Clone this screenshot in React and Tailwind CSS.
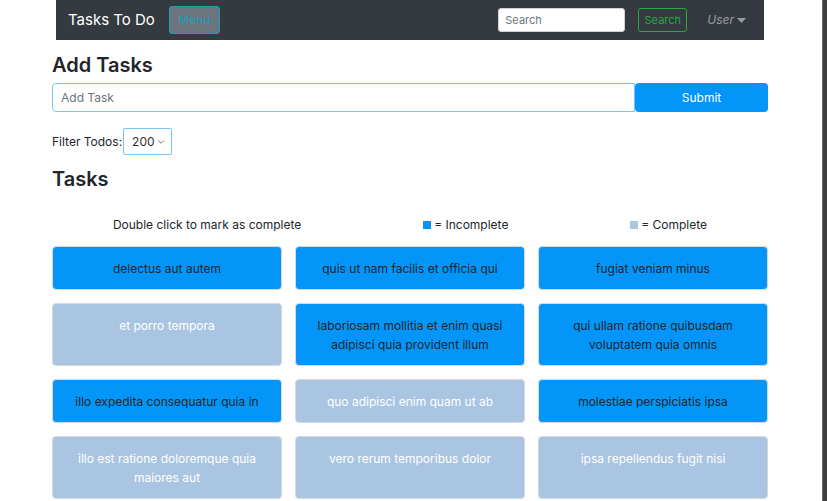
import { ChevronDown } from 'lucide-react'

const TASKS = [
  { title: 'delectus aut autem', done: false },
  { title: 'quis ut nam facilis et officia qui', done: false },
  { title: 'fugiat veniam minus', done: false },
  { title: 'et porro tempora', done: true },
  { title: 'laboriosam mollitia et enim quasi adipisci quia provident illum', done: false },
  { title: 'qui ullam ratione quibusdam voluptatem quia omnis', done: false },
  { title: 'illo expedita consequatur quia in', done: false },
  { title: 'quo adipisci enim quam ut ab', done: true },
  { title: 'molestiae perspiciatis ipsa', done: false },
  { title: 'illo est ratione doloremque quia maiores aut', done: true },
  { title: 'vero rerum temporibus dolor', done: true },
  { title: 'ipsa repellendus fugit nisi', done: true },
]

function Navbar() {
  return (
    <nav className="ml-[56px] w-[708px] h-[40px] bg-[#343a40] flex items-center pl-[12px] pr-[18px]">
      <span className="text-white text-[15px]">Tasks To Do</span>
      <button className="ml-[14px] h-[28px] w-[51px] rounded-[3px] border border-[#17a2b8] bg-[#6c757d] text-[#17a2b8] text-[12px]">
        Menu
      </button>
      <div className="ml-auto flex items-center">
        <input
          className="w-[127px] h-[24px] rounded-[3px] bg-white border border-[#ced4da] px-[6px] text-[11px] text-[#495057] placeholder-[#6c757d] outline-none"
          placeholder="Search"
        />
        <button className="ml-[13px] h-[24px] w-[49px] rounded-[3px] border border-[#28a745] text-[#28a745] text-[11px]">
          Search
        </button>
        <span className="ml-[20px] flex items-center gap-[3px] text-[#9a9da0] italic text-[12px]">
          User
          <svg width="9" height="5" viewBox="0 0 9 5"><path d="M0 0h9L4.5 5z" fill="#9a9da0" /></svg>
        </span>
      </div>
    </nav>
  )
}

function TaskCard({ task }) {
  return (
    <div
      className={
        'rounded-[4px] border border-[#d6d9dc] px-[10px] pt-[12px] pb-[11px] text-center text-[12px] leading-[19px] ' +
        (task.done ? 'bg-[#a9c5e1] text-white' : 'bg-[#0396f8] text-[#212529]')
      }
    >
      {task.title}
    </div>
  )
}

export default function App() {
  return (
    <div className="w-[827px] h-[501px] overflow-hidden bg-white flex" style={{ fontFamily: 'Inter, "Noto Sans", sans-serif' }}>
      <div className="w-[822px] shrink-0">
        <Navbar />

        <div className="pl-[52px] w-[768px] text-[#212529]">
          <h3 className="mt-[11px] text-[20px] leading-[28px] font-semibold">Add Tasks</h3>

          <div className="mt-[4px] flex h-[29px]">
            <input
              className="flex-1 h-full rounded-l-[4px] border border-[#7cc6f3] px-[8px] text-[12px] placeholder-[#6c757d] outline-none"
              placeholder="Add Task"
            />
            <button className="w-[133px] h-full rounded-[4px] bg-[#0396f8] text-white text-[12px]">Submit</button>
          </div>

          <div className="mt-[16px] flex items-center gap-[1px] text-[12px]">
            <span>Filter Todos:</span>
            <div className="w-[49px] h-[27px] border border-[#7cc6f3] rounded-[2px] flex items-center pl-[8px] pr-[5px] justify-between">
              <span className="text-[12px] text-[#333]">200</span>
              <ChevronDown size={10} strokeWidth={2} className="text-[#555]" />
            </div>
          </div>

          <h3 className="mt-[10px] text-[20px] leading-[28px] font-semibold">Tasks</h3>

          <div className="mt-[22px] flex justify-around items-center h-[20px] text-[12px]">
            <span>Double click to mark as complete</span>
            <span className="flex items-center gap-[3px]">
              <span className="w-[8px] h-[8px] bg-[#0396f8]" />= Incomplete
            </span>
            <span className="flex items-center gap-[3px]">
              <span className="w-[8px] h-[8px] bg-[#a9c5e1]" />= Complete
            </span>
          </div>

          <div className="mt-[11px] grid grid-cols-3 gap-[13px]">
            {TASKS.map((t, i) => (
              <TaskCard key={i} task={t} />
            ))}
          </div>
        </div>
      </div>
      <div className="flex-1 bg-[#3d3d3d] border-l border-[#6a6a6a]" />
    </div>
  )
}
